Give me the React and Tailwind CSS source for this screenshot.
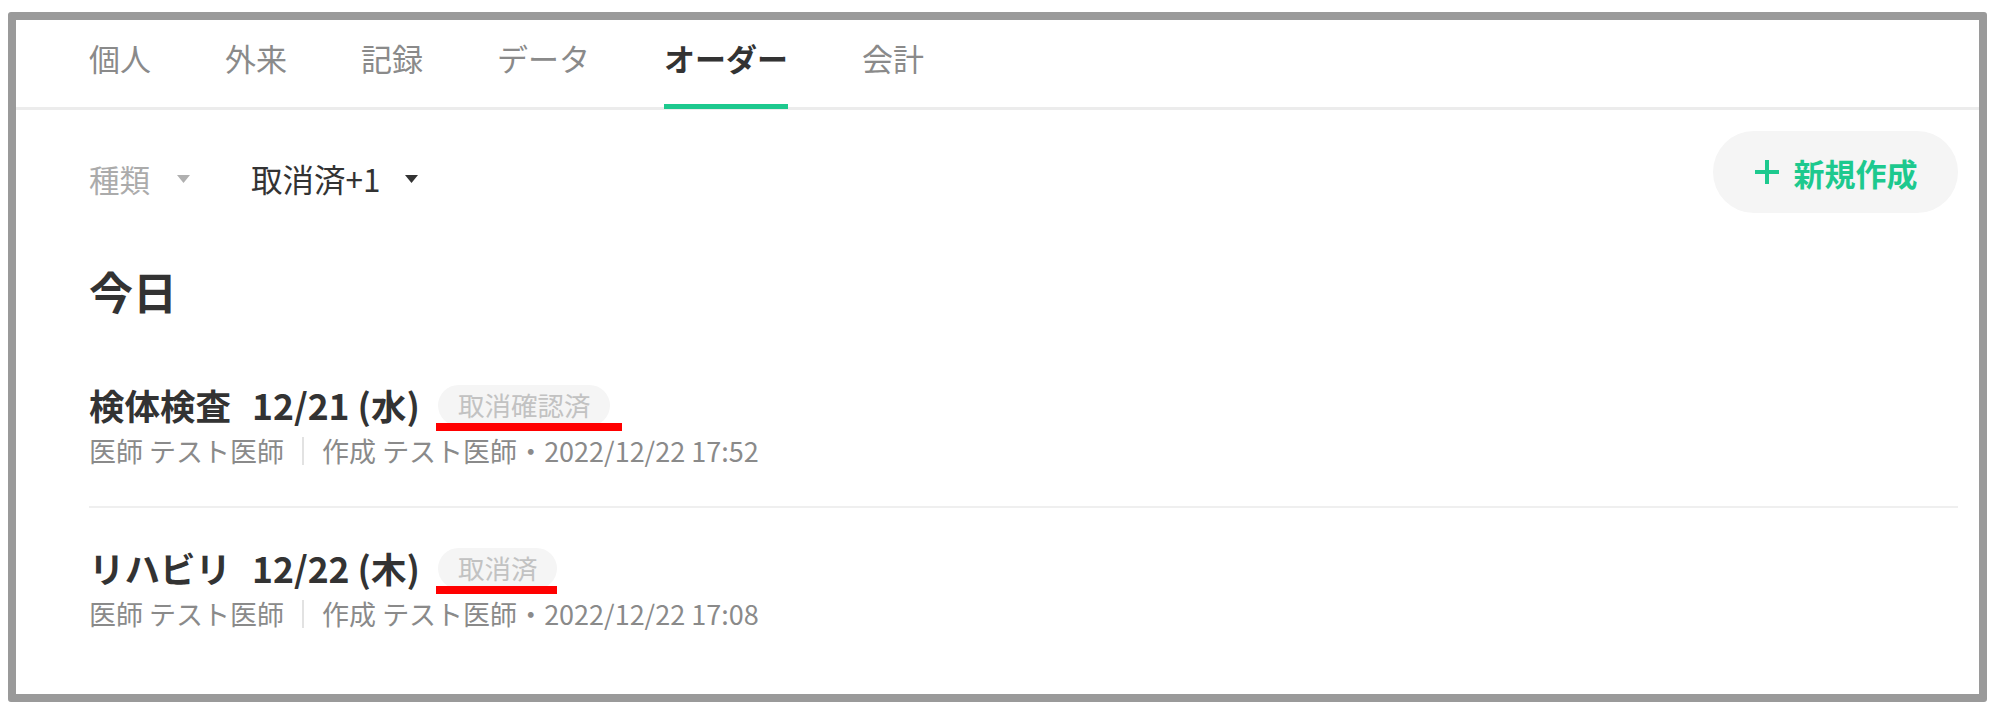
import React from 'react';

const tabs = ['個人', '外来', '記録', 'データ', 'オーダー', '会計'];

const orders = [
  { name: '検体検査', date: '12/21 (水)', status: '取消確認済', doctor: 'テスト医師', creator: 'テスト医師', createdAt: '2022/12/22 17:52', markWide: true },
  { name: 'リハビリ', date: '12/22 (木)', status: '取消済', doctor: 'テスト医師', creator: 'テスト医師', createdAt: '2022/12/22 17:08', markWide: false },
];

function Caret({ className }) {
  return (
    <svg width="13" height="8" viewBox="0 0 13 8" className={className}>
      <path d="M0 0 L13 0 L6.5 8 Z" fill="currentColor" />
    </svg>
  );
}

function OrderRow({ order, last }) {
  return (
    <div className={'pt-[35px] pb-[37px] ' + (last ? '' : 'border-b-2 border-[#efefef]')}>
      <div className="flex items-center h-[50px]">
        <span className="text-[35.5px] leading-[50px] font-bold text-[#333]">{order.name}</span>
        <span className="ml-[21px] text-[35.5px] leading-[50px] font-bold text-[#333]">{order.date}</span>
        <span className="relative ml-[18px] h-[41px] px-[20px] rounded-full bg-[#f5f5f5] flex items-center">
          <span className="text-[26.5px] leading-none text-[#c2c2c2]">{order.status}</span>
          {/* red annotation underline */}
          <span className={'absolute left-[-2px] bottom-[-5px] h-[8px] bg-[#ff0000] ' + (order.markWide ? 'right-[-12px]' : 'right-0')} />
        </span>
      </div>
      <div className="mt-[3px] flex items-center h-[36px] text-[27px] leading-[36px] text-[#8a8a8a]">
        <span>医師 {order.doctor}</span>
        <span className="mx-[18px] w-[2px] h-[28px] bg-[#e2e2e2]" />
        <span>作成 {order.creator}・{order.createdAt}</span>
      </div>
    </div>
  );
}

export default function App() {
  return (
    <div className="w-[2000px] h-[712px] bg-white pt-[12px] pl-[8px] font-['Noto_Sans_CJK_JP','Noto_Sans',sans-serif]">
      <div className="w-[1979px] h-[690px] border-[8px] border-[#9a9a9a] rounded-[3px] flex flex-col bg-white">
        <nav className="flex gap-[74px] pl-[73px] h-[90px] border-b-[3px] border-[#ececec]">
          {tabs.map((tab) => {
            const active = tab === 'オーダー';
            return (
              <div
                key={tab}
                className={
                  'h-[89px] pb-[10px] flex items-center border-b-[5px] text-[31px] leading-none ' +
                  (active ? 'border-[#1dc98e] font-bold text-[#333]' : 'border-transparent text-[#8a8a8a]')
                }
              >
                {tab}
              </div>
            );
          })}
        </nav>

        <div className="flex items-center justify-between pl-[73px] pr-[21px] mt-[21px]">
          <div className="flex items-center pt-[14px]">
            <span className="text-[30.5px] leading-none text-[#ababab]">種類</span>
            <Caret className="ml-[27px] text-[#b0b0b0]" />
            <span className="ml-[61px] text-[31.5px] leading-none text-[#333]">取消済+1</span>
            <Caret className="ml-[25px] text-[#333]" />
          </div>
          <button className="h-[82px] w-[245px] rounded-full bg-[#f5f5f5] flex items-center justify-center gap-[14px] text-[#1dc98e]">
            <svg width="26" height="26" viewBox="0 0 26 26">
              <path d="M13 1 V25 M1 13 H25" stroke="currentColor" strokeWidth="4" />
            </svg>
            <span className="text-[31px] leading-none font-bold">新規作成</span>
          </button>
        </div>

        <div className="pl-[73px] pr-[21px]">
          <h2 className="mt-[48px] text-[44px] leading-[60px] font-bold text-[#333]">今日</h2>
          <div className="mt-[24px]">
            {orders.map((o, i) => (
              <OrderRow key={o.name} order={o} last={i === orders.length - 1} />
            ))}
          </div>
        </div>
      </div>
    </div>
  );
}
